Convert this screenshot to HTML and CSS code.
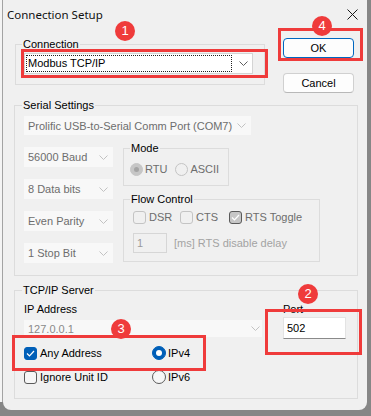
FILE: index.html
```html
<!DOCTYPE html>
<html lang="en">
<head>
    <meta charset="UTF-8">
    <meta name="viewport" content="width=device-width, initial-scale=1.0">
    <title>Connection Setup</title>
    <link rel="stylesheet" href="styles.css">
</head>
<body>
<div class="screen">
    <div class="desk-edge"></div>
    <div class="window">
        <div class="titlebar">
            <span class="title">Connection Setup</span>
            <svg class="close" width="11" height="11" viewBox="0 0 11 11"><path d="M0.5 0.5 L10.5 10.5 M10.5 0.5 L0.5 10.5" stroke="#1a1a1a" stroke-width="1" fill="none"/></svg>
        </div>
        <div class="content">
            <div class="top-row">
                <fieldset class="group group-connection">
                    <legend>Connection</legend>
                    <div class="combo combo-active">
                        <span class="focus">Modbus TCP/IP</span>
                        <svg class="chevron" width="9" height="5" viewBox="0 0 9 5"><path d="M0.5 0.5 L4.5 4.5 L8.5 0.5" stroke="#5f5f5f" fill="none"/></svg>
                    </div>
                </fieldset>
                <div class="buttons">
                    <button class="btn btn-default">OK</button>
                    <button class="btn">Cancel</button>
                </div>
            </div>

            <fieldset class="group group-serial">
                <legend>Serial Settings</legend>
                <div class="combo combo-off combo-port">
                    <span>Prolific USB-to-Serial Comm Port (COM7)</span>
                    <svg class="chevron" width="9" height="5" viewBox="0 0 9 5"><path d="M0.5 0.5 L4.5 4.5 L8.5 0.5" stroke="#c2c2c2" fill="none"/></svg>
                </div>
                <div class="serial-row">
                    <div class="serial-left">
                        <div class="combo combo-off"><span>56000 Baud</span><svg class="chevron" width="9" height="5" viewBox="0 0 9 5"><path d="M0.5 0.5 L4.5 4.5 L8.5 0.5" stroke="#c2c2c2" fill="none"/></svg></div>
                        <div class="combo combo-off"><span>8 Data bits</span><svg class="chevron" width="9" height="5" viewBox="0 0 9 5"><path d="M0.5 0.5 L4.5 4.5 L8.5 0.5" stroke="#c2c2c2" fill="none"/></svg></div>
                        <div class="combo combo-off"><span>Even Parity</span><svg class="chevron" width="9" height="5" viewBox="0 0 9 5"><path d="M0.5 0.5 L4.5 4.5 L8.5 0.5" stroke="#c2c2c2" fill="none"/></svg></div>
                        <div class="combo combo-off"><span>1 Stop Bit</span><svg class="chevron" width="9" height="5" viewBox="0 0 9 5"><path d="M0.5 0.5 L4.5 4.5 L8.5 0.5" stroke="#c2c2c2" fill="none"/></svg></div>
                    </div>
                    <div class="serial-right">
                        <fieldset class="group group-mode">
                            <legend>Mode</legend>
                            <div class="option-row">
                                <span class="option off"><span class="radio radio-off-on"></span>RTU</span>
                                <span class="option off"><span class="radio radio-off"></span>ASCII</span>
                            </div>
                        </fieldset>
                        <fieldset class="group group-flow">
                            <legend>Flow Control</legend>
                            <div class="flow-checks">
                                <span class="option off"><span class="box box-off"></span>DSR</span>
                                <span class="option off"><span class="box box-off"></span>CTS</span>
                                <span class="option off"><span class="box box-off-on"><svg width="9" height="7" viewBox="0 0 9 7"><path d="M1 3.5 L3.5 6 L8 1" stroke="#fff" stroke-width="1.2" fill="none"/></svg></span>RTS Toggle</span>
                            </div>
                            <div class="delay-row">
                                <span class="field field-off">1</span>
                                <span class="delay-text">[ms] RTS disable delay</span>
                            </div>
                        </fieldset>
                    </div>
                </div>
            </fieldset>

            <fieldset class="group group-tcp">
                <legend>TCP/IP Server</legend>
                <div class="tcp-top">
                    <div class="ip-col">
                        <div class="field-label">IP Address</div>
                        <div class="combo combo-off combo-ip"><span>127.0.0.1</span><svg class="chevron" width="9" height="5" viewBox="0 0 9 5"><path d="M0.5 0.5 L4.5 4.5 L8.5 0.5" stroke="#c2c2c2" fill="none"/></svg></div>
                    </div>
                    <div class="port-col">
                        <div class="field-label">Port</div>
                        <div class="field field-port">502</div>
                    </div>
                </div>
                <div class="tcp-options">
                    <span class="option"><span class="box box-on"><svg width="9" height="7" viewBox="0 0 9 7"><path d="M1 3.5 L3.5 6 L8 1" stroke="#fff" stroke-width="1.2" fill="none"/></svg></span>Any Address</span>
                    <span class="option"><span class="radio radio-on"></span>IPv4</span>
                    <span class="option"><span class="box"></span>Ignore Unit ID</span>
                    <span class="option"><span class="radio"></span>IPv6</span>
                </div>
            </fieldset>
        </div>
    </div>

    <!-- annotation marks -->
    <div class="mark mark-1"></div>
    <div class="mark mark-4"></div>
    <div class="mark mark-2"></div>
    <div class="mark mark-3"></div>
    <span class="badge badge-1">1</span>
    <span class="badge badge-4">4</span>
    <span class="badge badge-2">2</span>
    <span class="badge badge-3">3</span>
</div>
</body>
</html>
```

FILE: styles.css
```css
* {
    box-sizing: border-box;
}
body {
    margin: 0;
    background-color: #868686;
    font-family: "Liberation Sans", Arial, sans-serif;
    font-size: 11px;
    color: #000;
}
.screen {
    position: relative;
    display: flex;
    width: 371px;
    height: 416px;
}
.desk-edge {
    width: 3px;
    height: 402px;
    background-color: #f4f4f4;
    border-right: 1px solid #a3a3a3;
}
.window {
    width: 364px;
    height: 410px;
    background-color: #f0f0f0;
    border-radius: 0 0 8px 8px;
}

/* title bar */
.titlebar {
    height: 28px;
    display: flex;
    align-items: center;
    justify-content: space-between;
    padding: 0 9px 0 4px;
}
.title {
    font-family: "Noto Sans", sans-serif;
    font-size: 11.5px;
    color: #111;
}

.content {
    padding: 10px 0 0 11px;
}

/* group boxes */
.group {
    margin: 0;
    border: 1px solid #dcdcdc;
    min-width: 0;
}
.group legend {
    padding: 0 1px;
    margin-left: -2px;
    line-height: 12px;
}

.top-row {
    display: flex;
    align-items: flex-start;
}
.group-connection {
    width: 250px;
    margin-left: 1px;
    padding: 3px 8px 10px 8px;
}
.buttons {
    margin-left: 18px;
    display: flex;
    flex-direction: column;
    gap: 15px;
}
.btn {
    width: 71px;
    height: 20px;
    padding: 0;
    font-family: "Liberation Sans", Arial, sans-serif;
    font-size: 11px;
    color: #000;
    background-color: #fdfdfd;
    border: 1px solid #d0d0d0;
    border-bottom-color: #b8b8b8;
    border-radius: 4px;
}
.btn-default {
    border: 1px solid #0067c0;
}

/* combo boxes */
.combo {
    display: flex;
    align-items: center;
    justify-content: space-between;
    height: 20px;
    padding: 0 5px 0 4px;
    white-space: nowrap;
}
.combo-active {
    width: 229px;
    height: 21px;
    padding: 1px 4px 1px 1px;
    background-color: #fff;
    border: 1px solid #d4d4d4;
}
.combo-active .focus {
    width: 206px;
    height: 17px;
    line-height: 15px;
    padding-left: 1px;
    border: 1px dotted #222;
}
.combo-off {
    background-color: #f8f8f8;
    color: #6d6d6d;
}
.combo-port {
    width: 227px;
    height: 19px;
    padding-right: 5px;
}

/* serial settings */
.group-serial {
    width: 344px;
    margin-top: 6px;
    padding: 5px 8px 12px 9px;
}
.serial-row {
    display: flex;
    margin-top: 7px;
}
.serial-left {
    width: 89px;
    display: flex;
    flex-direction: column;
    gap: 12px;
    padding-top: 5px;
}
.serial-right {
    margin-left: 10px;
    display: flex;
    flex-direction: column;
    align-items: flex-start;
    gap: 7px;
}
.group-mode {
    width: 106px;
    padding: 7px 6px 8px 6px;
}
.group-mode legend {
    margin-left: 0;
}
.group-flow {
    width: 197px;
    padding: 4px 8px 8px 9px;
}
.group-flow legend {
    margin-left: -3px;
}

.option-row {
    display: flex;
    gap: 8px;
}
.option {
    display: flex;
    align-items: center;
    height: 16px;
    white-space: nowrap;
}
.off {
    color: #6d6d6d;
}

/* check boxes and radios */
.box {
    width: 13px;
    height: 13px;
    margin-right: 3px;
    display: inline-flex;
    align-items: center;
    justify-content: center;
    border: 1px solid #5a5a5a;
    border-radius: 3px;
    background-color: #f6f6f6;
}
.box-on {
    background-color: #005fb8;
    border-color: #005fb8;
}
.box-off {
    border-color: #c4c4c4;
    background-color: transparent;
}
.box-off-on {
    width: 13px;
    height: 13px;
    margin-right: 3px;
    display: inline-flex;
    align-items: center;
    justify-content: center;
    border-radius: 3px;
    background-color: #c6c6c6;
}
.radio {
    width: 14px;
    height: 14px;
    margin-right: 2px;
    border: 1px solid #5a5a5a;
    border-radius: 50%;
    background-color: #f6f6f6;
    display: inline-flex;
    align-items: center;
    justify-content: center;
}
.radio-on {
    background-color: #005fb8;
    border-color: #005fb8;
}
.radio-on::after {
    content: "";
    width: 6px;
    height: 6px;
    border-radius: 50%;
    background-color: #fff;
}
.radio-off {
    width: 13px;
    height: 13px;
    border-color: #c4c4c4;
    background-color: transparent;
}
.radio-off-on {
    width: 13px;
    height: 13px;
    border-color: #c6c6c6;
    background-color: #c6c6c6;
}
.radio-off-on::after {
    content: "";
    width: 5px;
    height: 5px;
    border-radius: 50%;
    background-color: #a4a4a4;
}

.flow-checks {
    display: grid;
    grid-template-columns: 47px 49px auto;
}
.delay-row {
    display: flex;
    align-items: center;
    margin-top: 8px;
}
.field {
    height: 20px;
    padding-left: 3px;
    line-height: 18px;
}
.field-off {
    width: 34px;
    border: 1px solid #d6d6d6;
    color: #9a9a9a;
}
.delay-text {
    margin-left: 7px;
    color: #a3a3a3;
}

/* tcp/ip server */
.group-tcp {
    width: 344px;
    margin-top: 8px;
    padding: 7px 8px 13px 9px;
}
.tcp-top {
    display: flex;
}
.field-label {
    line-height: 12px;
}
.ip-col {
    width: 238px;
}
.combo-ip {
    width: 238px;
    height: 17px;
    margin-top: 5px;
    padding-right: 2px;
    color: #8a8a8a;
}
.port-col {
    margin-left: 21px;
}
.field-port {
    width: 63px;
    height: 22px;
    margin-top: 2px;
    line-height: 20px;
    background-color: #fff;
    border: 1px solid #e3e3e3;
    border-bottom-color: #8a8a8a;
}
.tcp-options {
    display: grid;
    grid-template-columns: 128px auto;
    row-gap: 8px;
    margin-top: 6px;
}

/* annotation marks */
.mark {
    position: absolute;
    border: 3px solid #ef3b3b;
}
.mark-1 {
    left: 21px;
    top: 49px;
    width: 247px;
    height: 29px;
}
.mark-4 {
    left: 278px;
    top: 28px;
    width: 85px;
    height: 33px;
}
.mark-2 {
    left: 265px;
    top: 309px;
    width: 97px;
    height: 46px;
}
.mark-3 {
    left: 12px;
    top: 335px;
    width: 194px;
    height: 36px;
}
.badge {
    position: absolute;
    width: 20px;
    height: 20px;
    border-radius: 50%;
    background-color: #ef3b3b;
    color: #fff;
    font-size: 13px;
    line-height: 20px;
    text-align: center;
}
.badge-1 {
    left: 115px;
    top: 21px;
}
.badge-4 {
    left: 312px;
    top: 16px;
}
.badge-2 {
    left: 298px;
    top: 284px;
}
.badge-3 {
    left: 111px;
    top: 319px;
}
```
